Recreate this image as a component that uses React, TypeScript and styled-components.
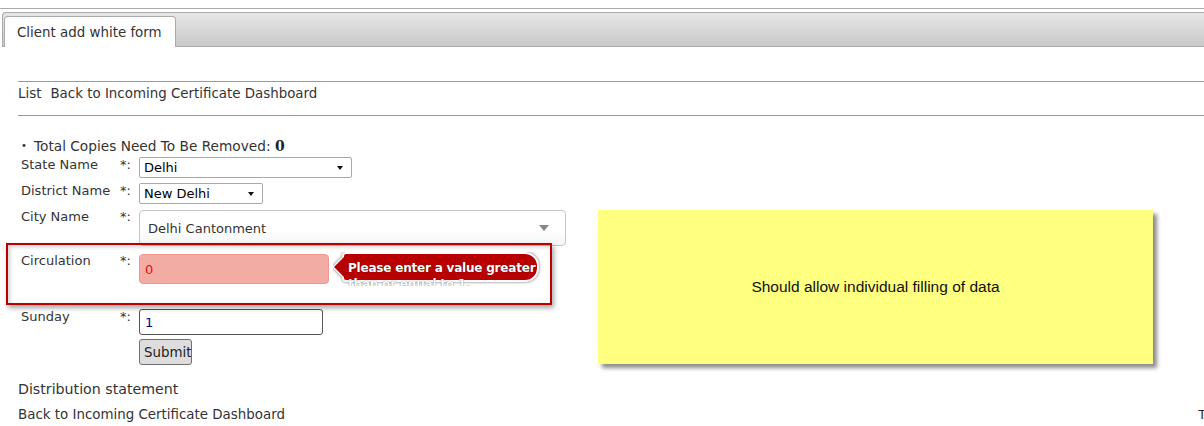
import React from 'react'
import styled, { createGlobalStyle } from 'styled-components'

const GlobalStyle = createGlobalStyle`
  html, body {
    margin: 0;
    padding: 0;
    background: #fff;
    overflow: hidden;
  }
  body {
    font-family: "DejaVu Sans", Verdana, sans-serif;
    font-size: 13px;
    color: #333;
  }
`

const Page = styled.div`
  position: relative;
  width: 1204px;
  height: 426px;
  overflow: hidden;
`

const TopRule = styled.div`
  margin-top: 8px;
  height: 1px;
  background: #aaa;
`

const TabBar = styled.div`
  display: flex;
  align-items: flex-end;
  margin: 3px 0 0 2px;
  height: 33px;
  border-top: 1px solid #aaa;
  border-left: 1px solid #aaa;
  border-bottom: 1px solid #aaa;
  border-top-left-radius: 4px;
  background: linear-gradient(#e6e6e6, #c9c9c9);
`

const Tab = styled.div`
  box-sizing: border-box;
  width: 172px;
  height: 31px;
  margin-left: 1px;
  margin-bottom: -1px;
  padding: 0 12px;
  line-height: 31px;
  font-size: 13.4px;
  background: #fff;
  border: 1px solid #aaa;
  border-bottom: none;
  border-radius: 4px 4px 0 0;
  color: #333;
`

const Content = styled.div`
  padding-left: 18px;
`

const NavBar = styled.div`
  margin-top: 34px;
  height: 35px;
  border-top: 1px solid #999;
  border-bottom: 1px solid #999;
  padding-top: 3px;
  box-sizing: border-box;
  line-height: 18px;
  font-size: 13.4px;
  display: flex;
  gap: 9px;
`

const NavLink = styled.a`
  color: #333;
  text-decoration: none;
`

const Bullet = styled.ul`
  margin: 21px 0 0 0;
  padding: 0 0 0 16px;
  line-height: 18px;
  font-size: 13.7px;
  list-style: none;
  position: relative;

  li::before {
    content: '•';
    position: absolute;
    left: 3px;
    font-size: 10px;
  }
`

const Count = styled.b`
  font-family: "DejaVu Serif", serif;
  font-size: 14px;
  color: #222;
`

const Form = styled.div`
  margin-top: 2px;
  padding-left: 3px;
`

const Row = styled.div<{ $gap?: number; $minHeight?: number }>`
  display: grid;
  grid-template-columns: 99px 19px auto;
  align-items: start;
  margin-bottom: ${p => p.$gap ?? 5}px;
  min-height: ${p => p.$minHeight ?? 0}px;
`

const Label = styled.span`
  line-height: 16px;
  white-space: nowrap;
`

const Field = styled.div<{ $offset?: number }>`
  position: relative;
  grid-column: 3;
  margin-top: ${p => p.$offset ?? 0}px;
`

const SelectBox = styled.div<{ $width: number }>`
  box-sizing: border-box;
  width: ${p => p.$width}px;
  height: 21px;
  padding: 0 8px 0 4px;
  border: 1px solid #a9a9a9;
  border-radius: 2px;
  display: flex;
  align-items: center;
  justify-content: space-between;
  color: #000;
`

const Caret = styled.span<{ $color?: string; $size?: number }>`
  width: 0;
  height: 0;
  border-left: ${p => (p.$size ?? 7) / 2}px solid transparent;
  border-right: ${p => (p.$size ?? 7) / 2}px solid transparent;
  border-top: ${p => Math.round((p.$size ?? 7) * 0.6)}px solid ${p => p.$color ?? '#111'};
`

const ComboBox = styled.div`
  box-sizing: border-box;
  width: 427px;
  height: 36px;
  padding: 0 16px 0 8px;
  border: 1px solid #c6c6c6;
  border-radius: 4px;
  background: linear-gradient(#fff 60%, #f4f4f4);
  display: flex;
  align-items: center;
  justify-content: space-between;
`

const TextInput = styled.div<{ $error?: boolean; $width: number; $height: number }>`
  box-sizing: border-box;
  width: ${p => p.$width}px;
  height: ${p => p.$height}px;
  padding-left: 5px;
  display: flex;
  align-items: center;
  border-radius: ${p => (p.$error ? 4 : 3)}px;
  border: 1px solid ${p => (p.$error ? '#f0988f' : '#555')};
  background: ${p => (p.$error ? '#f2aca3' : '#fff')};
  color: ${p => (p.$error ? '#e81010' : '#000080')};
`

const SubmitButton = styled.button`
  box-sizing: border-box;
  width: 53px;
  height: 26px;
  padding: 0 0 0 4px;
  text-align: left;
  overflow: hidden;
  white-space: nowrap;
  font: inherit;
  font-size: 13.4px;
  color: #222;
  background: #ddd;
  border: 1px solid #707070;
  border-radius: 3px;
`

const Tooltip = styled.div`
  position: absolute;
  left: 194px;
  top: -2px;
  height: 34px;
  width: 212px;
  overflow: hidden;
`

const Bubble = styled.div`
  position: relative;
  margin-left: 9px;
  box-sizing: border-box;
  width: 197px;
  height: 30px;
  background: #b80000;
  border: 2px solid #fff;
  border-radius: 4px 14px 14px 4px;
  box-shadow: 0 0 3px rgba(0, 0, 0, 0.6);

  &::before {
    content: '';
    position: absolute;
    left: -10px;
    top: 3px;
    width: 0;
    height: 0;
    border-top: 10px solid transparent;
    border-bottom: 10px solid transparent;
    border-right: 10px solid #b80000;
    filter: drop-shadow(-1.5px 0 0 #fff) drop-shadow(-1px 0 1px rgba(0, 0, 0, 0.4));
  }
`

const BubbleText = styled.div`
  position: absolute;
  left: 15px;
  top: 8px;
  white-space: nowrap;
  font-size: 12px;
  letter-spacing: -0.2px;
  font-weight: bold;
  line-height: 16px;
  color: #fff;
  text-shadow: 0 0 1px rgba(0, 0, 0, 0.7);
`

const Heading = styled.div`
  margin-top: 14px;
  font-size: 14.2px;
  line-height: 20px;
`

const FooterRow = styled.div`
  margin-top: 7px;
  display: flex;
  line-height: 18px;
  font-size: 13.4px;
`

const Trailing = styled.span`
  margin-left: auto;
  width: 60px;
  margin-right: -54px;
  flex-shrink: 0;
  font-family: "Liberation Sans", Arial, sans-serif;
  color: #222;
`

const Annotation = styled.div`
  position: absolute;
  left: 6px;
  top: 243px;
  box-sizing: border-box;
  width: 546px;
  height: 62px;
  border: 2px solid #bb0000;
  box-shadow: 2px 3px 5px rgba(0, 0, 0, 0.35), inset 2px 2px 4px rgba(0, 0, 0, 0.18);
  pointer-events: none;
`

const StickyNote = styled.div`
  position: absolute;
  left: 598px;
  top: 210px;
  width: 555px;
  height: 154px;
  display: flex;
  align-items: center;
  justify-content: center;
  background: #ffff80;
  box-shadow: 4px 4px 4px rgba(0, 0, 0, 0.45);
  font-family: "Liberation Sans", Arial, sans-serif;
  font-size: 15.5px;
  color: #111;
`

export default function App() {
  return (
    <>
      <GlobalStyle />
      <Page>
        <TopRule />
        <TabBar>
          <Tab>Client add white form</Tab>
        </TabBar>
        <Content>
          <NavBar>
            <NavLink href="#">List</NavLink>
            <NavLink href="#">Back to Incoming Certificate Dashboard</NavLink>
          </NavBar>
          <Bullet>
            <li>
              Total Copies Need To Be Removed: <Count>0</Count>
            </li>
          </Bullet>
          <Form>
            <Row>
              <Label>State Name</Label>
              <Label>*:</Label>
              <Field>
                <SelectBox $width={213}>
                  Delhi <Caret />
                </SelectBox>
              </Field>
            </Row>
            <Row>
              <Label>District Name</Label>
              <Label>*:</Label>
              <Field>
                <SelectBox $width={124}>
                  New Delhi <Caret />
                </SelectBox>
              </Field>
            </Row>
            <Row $gap={7}>
              <Label>City Name</Label>
              <Label>*:</Label>
              <Field $offset={1}>
                <ComboBox>
                  Delhi Cantonment <Caret $color="#888" $size={10} />
                </ComboBox>
              </Field>
            </Row>
            <Row $minHeight={52} $gap={4}>
              <Label>Circulation</Label>
              <Label>*:</Label>
              <Field $offset={1}>
                <TextInput $error $width={190} $height={30}>
                  0
                </TextInput>
                <Tooltip>
                  <Bubble />
                  <BubbleText>
                    Please enter a value greater
                    <br />
                    than or equal to 1.
                  </BubbleText>
                </Tooltip>
              </Field>
            </Row>
            <Row $gap={4}>
              <Label>Sunday</Label>
              <Label>*:</Label>
              <Field>
                <TextInput $width={184} $height={26}>
                  1
                </TextInput>
              </Field>
            </Row>
            <Row $gap={0}>
              <Field>
                <SubmitButton>Submit</SubmitButton>
              </Field>
            </Row>
          </Form>
          <Heading>Distribution statement</Heading>
          <FooterRow>
            <NavLink href="#">Back to Incoming Certificate Dashboard</NavLink>
            <Trailing>Top</Trailing>
          </FooterRow>
        </Content>
        <Annotation />
        <StickyNote>Should allow individual filling of data</StickyNote>
      </Page>
    </>
  )
}
